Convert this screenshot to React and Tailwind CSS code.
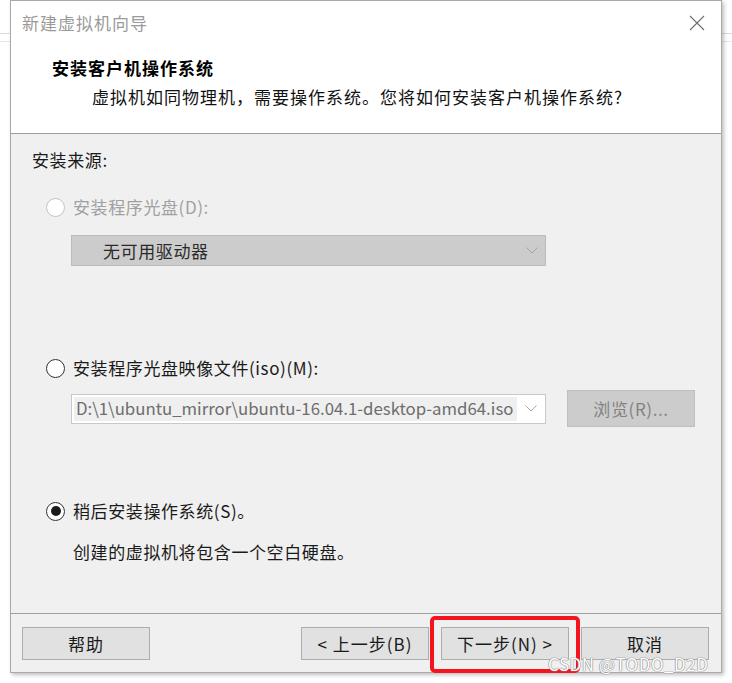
import React from 'react';

const font = { fontFamily: '"Noto Sans CJK SC", "Noto Sans", sans-serif' };

function Radio({ checked, disabled }) {
  return (
    <div
      className={`w-[19px] h-[19px] rounded-full border flex items-center justify-center bg-white ${
        disabled ? 'border-[#c4c4c4]' : 'border-[#333333]'
      }`}
    >
      {checked && <div className="w-[10px] h-[10px] rounded-full bg-[#1a1a1a]" />}
    </div>
  );
}

function Chevron({ color }) {
  return (
    <svg width="12" height="7" viewBox="0 0 12 7" className="shrink-0">
      <path d="M0.5 0.5 L6 6 L11.5 0.5" fill="none" stroke={color} strokeWidth="1" />
    </svg>
  );
}

function Button({ children }) {
  return (
    <div className="w-[128px] h-[33px] border border-[#adadad] bg-[#e1e1e1] flex items-center justify-center text-[17px] leading-[20px] tracking-[1px] text-[#1a1a1a]">
      {children}
    </div>
  );
}

export default function App() {
  return (
    <div className="relative w-[732px] h-[683px] bg-white overflow-hidden" style={font}>
      <div className="absolute left-0 right-0 top-[33px] h-px bg-[#d9d9d9]" />
      <div className="absolute left-0 right-0 top-[41px] h-px bg-[#e8e8e8]" />

      <div className="relative ml-[10px] w-[712px] h-[673px] border border-[#a9a9a9] bg-[#f0f0f0] flex flex-col shadow-[2px_2px_4px_rgba(0,0,0,0.25)]">
        {/* header */}
        <div className="h-[133px] bg-white border-b border-[#a0a0a0] shrink-0">
          <div className="h-[43px] flex items-center justify-between pl-[11px] pr-[16px]">
            <span className="text-[17px] tracking-[1px] text-[#9a9a9a]">新建虚拟机向导</span>
            <svg width="16" height="16" viewBox="0 0 16 16">
              <path d="M1 1 L15 15 M15 1 L1 15" stroke="#6e6e6e" strokeWidth="1.1" />
            </svg>
          </div>
          <div className="pl-[41px] mt-[12px] h-[24px] flex items-center text-[17px] font-bold tracking-[1px] text-black">
            安装客户机操作系统
          </div>
          <div className="pl-[81px] mt-[5px] h-[24px] flex items-center text-[17px] tracking-[1px] text-[#111]">
            虚拟机如同物理机，需要操作系统。您将如何安装客户机操作系统?
          </div>
        </div>

        {/* body */}
        <div className="flex-1 pl-[21px] flex flex-col text-[17px] tracking-[0.6px]">
          <div className="mt-[14px] h-[24px] flex items-center text-[#1a1a1a]">安装来源:</div>

          <div className="mt-[23px] h-[24px] flex items-center pl-[14px] gap-[8px]">
            <Radio disabled />
            <span className="text-[#a0a0a0]">安装程序光盘(D):</span>
          </div>
          <div className="mt-[16px] ml-[39px] w-[475px] h-[31px] border border-[#bcbcbc] bg-[#cccccc] flex items-center justify-between pl-[31px] pr-[7px]">
            <span className="text-[#2a2a2a]">无可用驱动器</span>
            <Chevron color="#a3a3a3" />
          </div>

          <div className="mt-[90px] h-[24px] flex items-center pl-[14px] gap-[8px]">
            <Radio />
            <span className="text-[#1a1a1a]">安装程序光盘映像文件(iso)(M):</span>
          </div>
          <div className="mt-[10px] ml-[39px] flex items-center gap-[21px]">
            <div className="w-[475px] h-[30px] border border-[#c8c8c8] bg-white flex items-center justify-between p-[2px] pr-[8px]">
              <div className="h-full w-[443px] bg-[#efefef] flex items-center pl-[2px] whitespace-nowrap overflow-hidden text-[16.8px] text-[#6d6d6d] tracking-[0px]">
                D:\1\ubuntu_mirror\ubuntu-16.04.1-desktop-amd64.iso
              </div>
              <Chevron color="#a8a8a8" />
            </div>
            <div className="w-[128px] h-[37px] border border-[#bfbfbf] bg-[#cccccc] flex items-center justify-center text-[#838383]">
              浏览(R)...
            </div>
          </div>

          <div className="mt-[72px] h-[24px] flex items-center pl-[14px] gap-[8px]">
            <Radio checked />
            <span className="text-[#1a1a1a]">稍后安装操作系统(S)。</span>
          </div>
          <div className="mt-[17px] h-[24px] flex items-center pl-[41px] text-[#1a1a1a]">
            创建的虚拟机将包含一个空白硬盘。
          </div>
        </div>

        {/* footer */}
        <div className="h-[59px] shrink-0 border-t border-[#a0a0a0] flex items-start pt-[13px] pl-[11px] pr-[12px]">
          <Button>帮助</Button>
          <div className="flex-1" />
          <div className="flex gap-[12px]">
            <Button>&lt; 上一步(B)</Button>
            <Button>下一步(N) &gt;</Button>
            <Button>取消</Button>
          </div>
        </div>
      </div>

      {/* annotation overlay */}
      <div className="absolute left-[430px] top-[616px] w-[150px] h-[57px] border-[4px] border-[#f5141e] rounded-[5px]" />
      <div
        className="absolute left-[548px] top-[655px] text-[17px] leading-[18px] text-white tracking-[0.5px]"
        style={{ textShadow: '0 0 1px #888, 0 0 1px #888, 0 0 1px #888' }}
      >
        CSDN @TODO_D2D
      </div>
    </div>
  );
}
